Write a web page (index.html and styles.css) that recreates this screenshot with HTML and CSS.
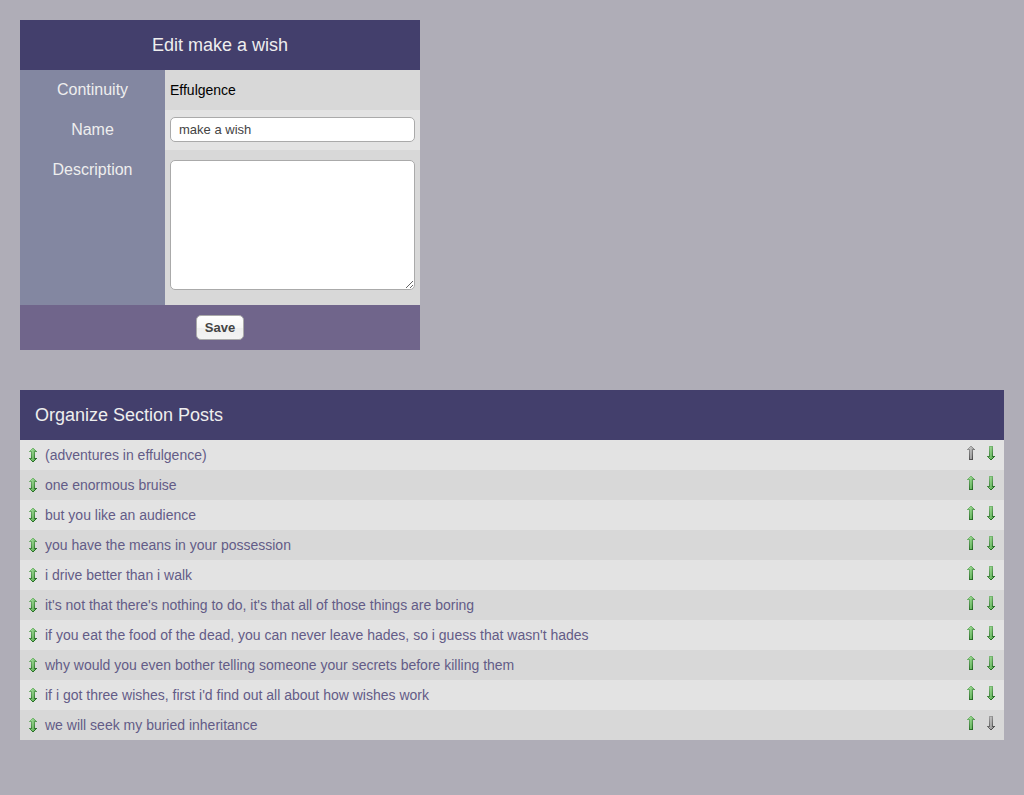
FILE: index.html
```
<!DOCTYPE html>
<html lang="en">
<head>
<meta charset="utf-8">
<title>Edit make a wish</title>
<link rel="stylesheet" href="styles.css">
<script src="posts.js" defer></script>
</head>
<body>
<svg class="defs" aria-hidden="true">
  <defs>
    <linearGradient id="green-fill" x1="0" y1="0" x2="1" y2="1">
      <stop offset="0" stop-color="#a5dc9b"/><stop offset="1" stop-color="#58ad50"/>
    </linearGradient>
    <linearGradient id="green-edge" x1="0" y1="0" x2="0.4" y2="1">
      <stop offset="0" stop-color="#8bc985"/><stop offset="1" stop-color="#286e26"/>
    </linearGradient>
    <linearGradient id="gray-fill" x1="0" y1="0" x2="1" y2="1">
      <stop offset="0" stop-color="#c6c6c6"/><stop offset="1" stop-color="#949494"/>
    </linearGradient>
    <linearGradient id="gray-edge" x1="0" y1="0" x2="0.4" y2="1">
      <stop offset="0" stop-color="#acacac"/><stop offset="1" stop-color="#505050"/>
    </linearGradient>
    <path id="up-edge" d="M7 1H9V2H10V3H11V4H12V5H10V15H6V5H4V4H5V3H6V2H7Z"/>
    <path id="up-fill" d="M7 2H9V3H10V4H9V14H7V4H6V3H7Z"/>
    <path id="down-edge" d="M6 1H10V11H12V12H11V13H10V14H9V15H7V14H6V13H5V12H4V11H6Z"/>
    <path id="down-fill" d="M7 2H9V12H10V13H9V14H7V13H6V12H7Z"/>
    <path id="both-edge" d="M7 1H9V2H10V3H11V4H12V5H10V11H12V12H11V13H10V14H9V15H7V14H6V13H5V12H4V11H6V5H4V4H5V3H6V2H7Z"/>
    <path id="both-fill" d="M7 2H9V3H10V4H9V12H10V13H9V14H7V13H6V12H7V4H6V3H7Z"/>
  </defs>
</svg>
<main class="page">
  <form class="editor">
    <table class="editor-table">
      <thead><tr><th class="title" colspan="2">Edit make a wish</th></tr></thead>
      <tbody>
        <tr><th class="label" scope="row">Continuity</th><td class="field even">Effulgence</td></tr>
        <tr><th class="label" scope="row"><label for="name">Name</label></th><td class="field short odd"><input class="control" id="name" type="text" value="make a wish"></td></tr>
        <tr><th class="label" scope="row"><label for="description">Description</label></th><td class="field even tall"><textarea class="control area" id="description"></textarea></td></tr>
      </tbody>
      <tfoot><tr><td class="footer" colspan="2"><button class="save" type="button">Save</button></td></tr></tfoot>
    </table>
  </form>
  <table class="posts">
    <thead><tr><th class="title posts-title" colspan="3">Organize Section Posts</th></tr></thead>
    <tbody id="posts"></tbody>
  </table>
</main>
</body>
</html>
```
FILE: styles.css
```
* { box-sizing: border-box; }
body {
  margin: 0;
  background: #afadb7;
  color: #000;
  font: 14px/20px "Liberation Sans", Arial, sans-serif;
}
.defs { position: absolute; width: 0; height: 0; }
.page { padding: 20px; }
table { border-collapse: collapse; border-spacing: 0; }
th, td { padding: 0; }
.editor { margin-bottom: 40px; }
.editor-table { width: 400px; max-width: 100%; }
.title {
  padding: 15px;
  background: #433f6c;
  color: #eee;
  font-size: 18px;
  font-weight: normal;
  text-align: center;
}
.posts-title { text-align: left; }
.label {
  width: 145px;
  padding: 10px 5px;
  background: #8387a1;
  color: #eee;
  font-size: 16px;
  font-weight: normal;
  vertical-align: top;
}
.field { padding: 7px 5px; }
.short { padding: 7px 5px 8px; }
.tall { padding: 10px 5px 15px; }
.even { background: #d8d8d8; }
.odd { background: #e3e3e3; }
.control {
  display: block;
  width: 100%;
  height: 25px;
  margin: 0;
  padding: 0 8px;
  border: 1px solid #aaa;
  border-radius: 5px;
  background: #fff;
  color: #444;
  font: 13px/20px "Liberation Sans", Arial, sans-serif;
}
.area { height: 130px; padding: 5px 8px; resize: both; }
.footer { padding: 10px; background: #70658b; text-align: center; }
.save {
  display: block;
  height: 25px;
  margin: 0 auto;
  padding: 0 8px;
  border: 1px solid #aaa;
  border-radius: 5px;
  background: linear-gradient(#fff 0%, #f6f6f6 50%, #eee 52%, #f4f4f4 100%);
  color: #444;
  font: bold 13px/20px "Liberation Sans", Arial, sans-serif;
}
.posts { width: 100%; }
.posts tbody tr { height: 30px; background: #e3e3e3; }
.posts tbody tr:nth-child(even) { background: #d8d8d8; }
.handle { width: 25px; padding-left: 5px; }
.moves { width: 50px; }
.move-list { display: flex; justify-content: flex-end; gap: 4px; padding: 0 5px 4px; }
.move { display: block; padding: 0; border: 0; background: none; }
.icon { display: block; width: 16px; height: 16px; }
.green-edge { fill: url(#green-edge); }
.green-fill { fill: url(#green-fill); }
.gray-edge { fill: url(#gray-edge); }
.gray-fill { fill: url(#gray-fill); }
.post-link { color: #635c87; text-decoration: none; }
```
FILE: posts.js
```
const posts = [
  "(adventures in effulgence)",
  "one enormous bruise",
  "but you like an audience",
  "you have the means in your possession",
  "i drive better than i walk",
  "it's not that there's nothing to do, it's that all of those things are boring",
  "if you eat the food of the dead, you can never leave hades, so i guess that wasn't hades",
  "why would you even bother telling someone your secrets before killing them",
  "if i got three wishes, first i'd find out all about how wishes work",
  "we will seek my buried inheritance"
];
const icon = (shape, color) =>
  `<svg class="icon" viewBox="0 0 16 16" aria-hidden="true"><use class="${color}-edge" href="#${shape}-edge"/><use class="${color}-fill" href="#${shape}-fill"/></svg>`;
const move = (shape, disabled) =>
  `<button class="move" type="button" aria-label="Move ${shape}" ${disabled ? "disabled" : ""}>${icon(shape, disabled ? "gray" : "green")}</button>`;
document.getElementById("posts").innerHTML = posts.map((title, i) => `
  <tr>
    <td class="handle">${icon("both", "green")}</td>
    <td><a class="post-link" href="#">${title}</a></td>
    <td class="moves"><div class="move-list">${move("up", i === 0)}${move("down", i === posts.length - 1)}</div></td>
  </tr>`).join("");
```
